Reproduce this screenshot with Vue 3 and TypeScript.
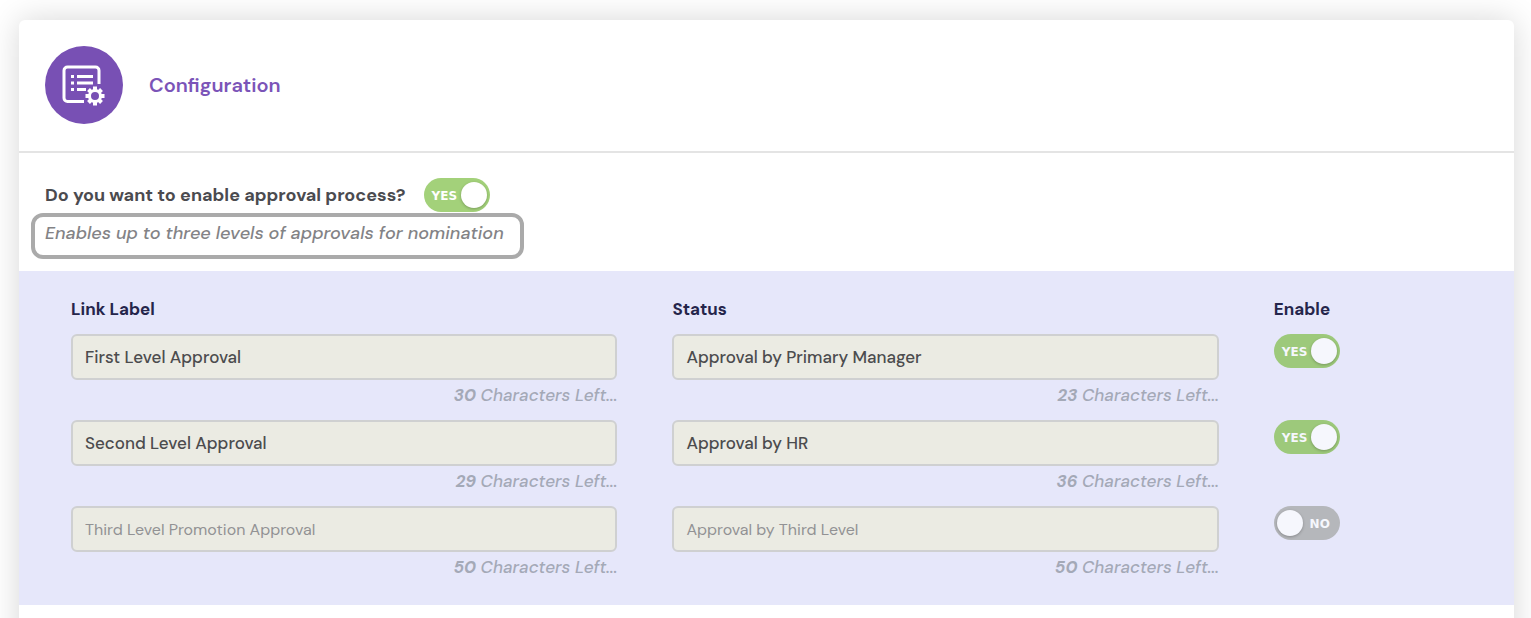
<script setup lang="ts">
import { ref } from 'vue'

interface Field {
  value: string
  placeholder: string
  left: number
}

interface Level {
  name: string
  label: Field
  status: Field
  enabled: boolean
}

const approvalEnabled = ref(true)

const levels = ref<Level[]>([
  {
    name: 'first',
    label: { value: 'First Level Approval', placeholder: '', left: 30 },
    status: { value: 'Approval by Primary Manager', placeholder: '', left: 23 },
    enabled: true,
  },
  {
    name: 'second',
    label: { value: 'Second Level Approval', placeholder: '', left: 29 },
    status: { value: 'Approval by HR', placeholder: '', left: 36 },
    enabled: true,
  },
  {
    name: 'third',
    label: { value: '', placeholder: 'Third Level Promotion Approval', left: 50 },
    status: { value: '', placeholder: 'Approval by Third Level', left: 50 },
    enabled: false,
  },
])
</script>

<template>
  <main class="page">
    <section class="card">
      <header class="card-header">
        <span class="badge">
          <svg viewBox="0 0 78 78" aria-hidden="true">
            <circle class="disc" cx="39" cy="39" r="39" />
            <path class="line" d="M54 38V24.500a3.500 3.500 0 0 0-3.500-3.500H22.500a3.500 3.500 0 0 0-3.500 3.500v27.500a3.500 3.500 0 0 0 3.500 3.500H39" />
            <path class="rows" d="M32 30.500H48M32 37H48M32 43.500H41" />
            <path class="rows" d="M26 30.500h3M26 37h3M26 43.500h3" />
            <g transform="translate(50 50)">
              <path class="teeth" d="M0-9.500V9.500M-9.500 0H9.500M-6.500-6.500L6.500 6.500M-6.500 6.500L6.500-6.500" />
              <circle class="gear" r="5.500" />
            </g>
          </svg>
        </span>
        <h1 class="title">Configuration</h1>
      </header>

      <div class="question">
        <div class="question-row">
          <label class="prompt" for="approval">Do you want to enable approval process?</label>
          <span class="toggle">
            <input id="approval" v-model="approvalEnabled" type="checkbox" />
            <span class="toggle-text">{{ approvalEnabled ? 'YES' : 'NO' }}</span>
          </span>
        </div>
        <p class="hint">Enables up to three levels of approvals for nomination</p>
      </div>

      <div class="panel">
        <div class="grid headings">
          <span id="col-label">Link Label</span>
          <span id="col-status">Status</span>
          <span id="col-enable">Enable</span>
        </div>
        <div v-for="level in levels" :key="level.name" class="grid level">
          <div class="field">
            <input v-model="level.label.value" type="text" :placeholder="level.label.placeholder" aria-labelledby="col-label" />
            <p class="counter"><b>{{ level.label.left }}</b> Characters Left...</p>
          </div>
          <div class="field">
            <input v-model="level.status.value" type="text" :placeholder="level.status.placeholder" aria-labelledby="col-status" />
            <p class="counter"><b>{{ level.status.left }}</b> Characters Left...</p>
          </div>
          <span class="toggle muted">
            <input v-model="level.enabled" type="checkbox" aria-labelledby="col-enable" />
            <span class="toggle-text">{{ level.enabled ? 'YES' : 'NO' }}</span>
          </span>
        </div>
      </div>
    </section>
  </main>
</template>

<style>
body {
  margin: 0;
  background: #fff;
}
</style>

<style scoped>
.page {
  box-sizing: border-box;
  height: 100vh;
  overflow: hidden;
  padding: 20px 17px 0 19px;
  font-family: "DM Sans", Inter, "Open Sans", sans-serif;
}

.card {
  min-height: 700px;
  background: #fff;
  border-radius: 6px;
  box-shadow: 0 0 32px rgba(0, 0, 0, 0.16);
}

.card-header {
  display: flex;
  align-items: center;
  gap: 26px;
  padding: 26px 26px 27px;
  border-bottom: 2px solid #e4e4e4;
}

.badge,
.badge svg {
  display: block;
  width: 78px;
  height: 78px;
}

.disc {
  fill: #7850b4;
}

.line,
.rows,
.teeth,
.gear {
  fill: none;
  stroke: #fff;
  stroke-width: 3;
}

.teeth {
  stroke-width: 4;
}

.gear {
  fill: #7850b4;
}

.title {
  margin: 0;
  color: #7b54b8;
  font-size: 20px;
  font-weight: 600;
  line-height: 24px;
}

.question {
  padding: 25px 26px 12px;
}

.question-row {
  display: flex;
  align-items: center;
  gap: 18px;
}

.prompt {
  color: #4b4b4f;
  font-size: 18px;
  font-weight: 700;
  line-height: 24px;
}

.hint {
  width: fit-content;
  margin: 1px 0 0 -14px;
  padding: 4px 16px 10px 10px;
  border: 4px solid #aaa;
  border-radius: 12px;
  color: #838386;
  font-size: 18px;
  font-style: italic;
  font-weight: 500;
  line-height: 24px;
}

.toggle {
  --on: #a3d17a;
  --off: #aeaeae;
  --knob: #fff;
  position: relative;
  display: block;
  width: 66px;
  height: 34px;
}

.muted {
  --on: #9dc97b;
  --off: #b5b7bb;
  --knob: #f6f7fd;
}

.toggle input {
  appearance: none;
  display: flex;
  align-items: center;
  box-sizing: border-box;
  width: 100%;
  height: 100%;
  margin: 0;
  padding: 0 3px;
  border-radius: 17px;
  background: var(--off);
  cursor: pointer;
}

.toggle input::before {
  content: "";
  width: 26px;
  height: 26px;
  border-radius: 50%;
  background: var(--knob);
  box-shadow: 0 1px 3px rgba(0, 0, 0, 0.25);
}

.toggle input:checked {
  justify-content: flex-end;
  background: var(--on);
}

.toggle-text {
  position: absolute;
  top: 10px;
  right: 10px;
  color: var(--knob);
  font-family: "DejaVu Sans", sans-serif;
  font-size: 12px;
  font-weight: 700;
  line-height: 16px;
  pointer-events: none;
}

.toggle input:checked + .toggle-text {
  right: auto;
  left: 8px;
}

.panel {
  padding: 26px 54px 13px 52px;
  background: #e6e7fa;
}

.grid {
  display: grid;
  grid-template-columns: 546fr 546fr 186fr;
  column-gap: 55px;
}

.headings {
  margin-bottom: 13px;
  color: #25254b;
  font-size: 17px;
  font-weight: 700;
  line-height: 24px;
}

.field input {
  display: block;
  box-sizing: border-box;
  width: 100%;
  height: 46px;
  padding: 0 12px;
  border: 2px solid #cfd0d1;
  border-radius: 6px;
  background: #ebebe3;
  color: #4c4c4e;
  font: inherit;
  font-size: 17px;
  font-weight: 500;
}

.field input::placeholder {
  color: #929294;
  opacity: 1;
  font-size: 16px;
  font-weight: 400;
}

.counter {
  margin: 3px 0 13px;
  color: #a4a9b7;
  font-size: 17px;
  font-style: italic;
  font-weight: 500;
  line-height: 24px;
  text-align: right;
}
</style>
